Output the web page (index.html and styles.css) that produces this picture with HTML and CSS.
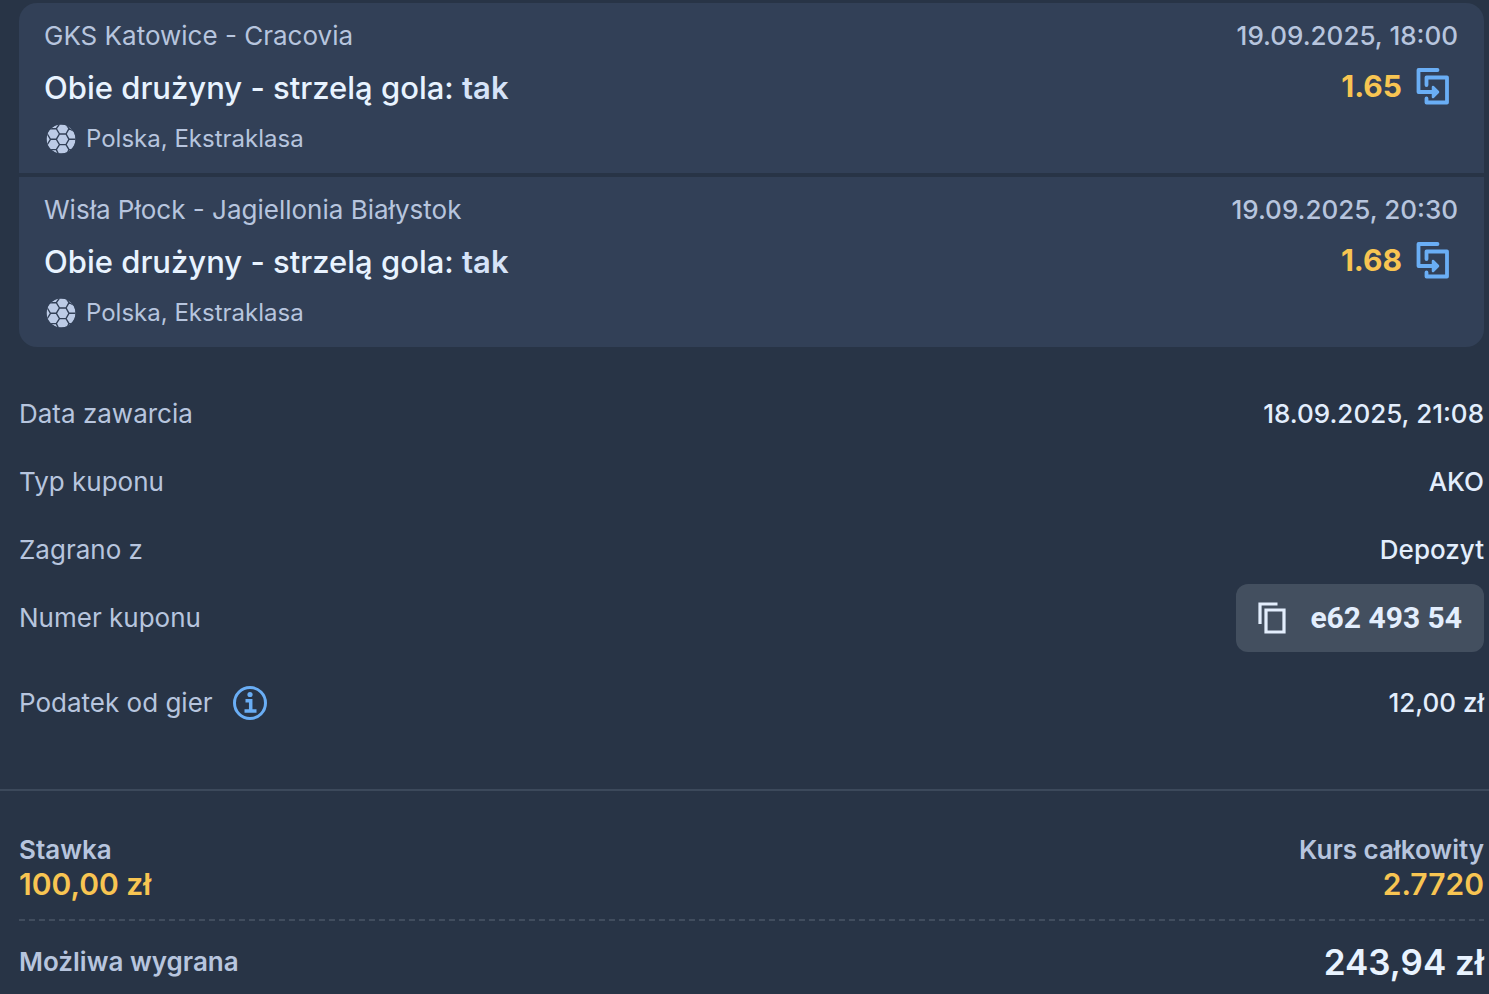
FILE: index.html
```
<!DOCTYPE html>
<html lang="pl">
<head>
    <meta charset="UTF-8">
    <meta name="viewport" content="width=device-width, initial-scale=1">
    <title>Kupon</title>
    <link rel="stylesheet" href="styles.css">
</head>
<body>
    <svg class="sprite" aria-hidden="true">
        <symbol id="icon-ball" viewBox="0 0 30 30">
            <clipPath id="ball-clip"><circle cx="15" cy="15" r="14.5"/></clipPath>
            <g clip-path="url(#ball-clip)">
                <circle cx="15" cy="15" r="14.5" fill="#bccbe6"/>
                <path d="M13.500 10h6.500l3 5.300-3 5.300h-6.500l-3.200-5.300zM10.300 15.300H4.500L1 9.500M4.500 15.300L1 21M13.500 10l-3.200-5.300H3M10.300 4.700L13.500 0M20 10l3-5.300L20 0M23 4.700l6 3M23 15.300h7M13.500 20.600l-3.200 5H3M10.300 25.600L12.500 30M20 20.600l3 5-2.500 5M23 25.600h6" fill="none" stroke="#324057" stroke-width="1.400"/>
            </g>
        </symbol>
        <symbol id="icon-share" viewBox="0 0 34 38">
            <g fill="none" stroke="#6aaef5" stroke-width="3.800" stroke-linecap="round" stroke-linejoin="round">
                <path d="M21.500 3H2.500v22h15" />
                <path d="M10.500 18V10.500h20.500V35.500H10.500v-4" />
            </g>
            <path d="M17 20l5 5-5 5z" fill="#6aaef5" stroke="#6aaef5" stroke-width="2.500" stroke-linejoin="round"/>
        </symbol>
    </svg>

    <main class="coupon">
        <ul class="bets">
            <li class="bet">
                <div class="bet-row bet-match">
                    <span>GKS Katowice - Cracovia</span>
                    <time datetime="2025-09-19T18:00">19.09.2025, 18:00</time>
                </div>
                <div class="bet-row bet-pick">
                    <span>Obie drużyny - strzelą gola: <b>tak</b></span>
                    <span class="bet-odds">1.65
                        <button type="button" class="icon-button" aria-label="Przenieś na kupon"><svg class="share"><use href="#icon-share"/></svg></button>
                    </span>
                </div>
                <div class="bet-league">
                    <svg class="ball" aria-hidden="true"><use href="#icon-ball"/></svg>
                    <span>Polska, Ekstraklasa</span>
                </div>
            </li>
            <li class="bet">
                <div class="bet-row bet-match">
                    <span>Wisła Płock - Jagiellonia Białystok</span>
                    <time datetime="2025-09-19T20:30">19.09.2025, 20:30</time>
                </div>
                <div class="bet-row bet-pick">
                    <span>Obie drużyny - strzelą gola: <b>tak</b></span>
                    <span class="bet-odds">1.68
                        <button type="button" class="icon-button" aria-label="Przenieś na kupon"><svg class="share"><use href="#icon-share"/></svg></button>
                    </span>
                </div>
                <div class="bet-league">
                    <svg class="ball" aria-hidden="true"><use href="#icon-ball"/></svg>
                    <span>Polska, Ekstraklasa</span>
                </div>
            </li>
        </ul>

        <dl class="details">
            <div class="detail"><dt>Data zawarcia</dt><dd>18.09.2025, 21:08</dd></div>
            <div class="detail"><dt>Typ kuponu</dt><dd>AKO</dd></div>
            <div class="detail"><dt>Zagrano z</dt><dd>Depozyt</dd></div>
            <div class="detail">
                <dt>Numer kuponu</dt>
                <dd>
                    <button type="button" class="copy-button">
                        <svg class="copy" viewBox="0 0 28 32" aria-hidden="true">
                            <path d="M19.500 2H2v20M8 8h18v22H8z" fill="none" stroke="#e3eefd" stroke-width="3.200"/>
                        </svg>
                        <span>e62 493 54</span>
                    </button>
                </dd>
            </div>
            <div class="detail detail-tax">
                <dt>
                    Podatek od gier
                    <button type="button" class="icon-button" aria-label="Informacja o podatku">
                        <svg class="info" viewBox="0 0 34 34" fill="none" stroke="#6aaef5">
                            <circle cx="17" cy="17" r="15.500" stroke-width="3"/>
                            <circle cx="17" cy="8.500" r="2.600" fill="#6aaef5" stroke="none"/>
                            <path d="M12.500 14.800h5.200v10M11.500 25h12" stroke-width="3.500"/>
                        </svg>
                    </button>
                </dt>
                <dd>12,00 zł</dd>
            </div>
        </dl>
    </main>

    <footer class="summary">
        <dl class="totals">
            <div><dt>Stawka</dt><dd>100,00 zł</dd></div>
            <div class="total-odds"><dt>Kurs całkowity</dt><dd>2.7720</dd></div>
        </dl>
        <svg class="dashes" aria-hidden="true"><line x1="0" y1="1" x2="100%" y2="1"/></svg>
        <dl class="win">
            <dt>Możliwa wygrana</dt>
            <dd>243,94 zł</dd>
        </dl>
    </footer>
</body>
</html>
```
FILE: styles.css
```
* {
    box-sizing: border-box;
}

body {
    margin: 0;
    background: #283446;
    color: #b7c5de;
    font-family: Inter, sans-serif;
    font-size: 26px;
    line-height: 34px;
}

ul, dl, dd {
    margin: 0;
    padding: 0;
}

button {
    border: none;
    font: inherit;
    color: inherit;
    cursor: pointer;
}

svg {
    display: block;
}

.sprite {
    position: absolute;
    width: 0;
    height: 0;
}

.coupon {
    padding: 3px 5px 0 19px;
}

.bets {
    display: flex;
    flex-direction: column;
    gap: 4px;
    border-radius: 18px;
    overflow: hidden;
    list-style: none;
}

.bet {
    padding: 16px 26px 17px 25px;
    background: #324057;
}

.bet-row {
    display: flex;
    align-items: center;
    justify-content: space-between;
}

.bet-match time {
    font-weight: 500;
}

.bet-pick {
    margin: 14px 0 13px;
    height: 42px;
    color: #e8f3ff;
    font-size: 31px;
    font-weight: 500;
}

.bet-pick b {
    color: #d6e3f8;
    font-weight: 600;
}

.bet-odds {
    display: flex;
    align-items: center;
    align-self: flex-start;
    gap: 14px;
    padding-right: 8px;
    color: #f8c552;
    font-size: 30px;
    font-weight: 700;
}

.icon-button {
    padding: 0;
    background: none;
}

.share {
    width: 34px;
    height: 38px;
}

.bet-league {
    display: flex;
    align-items: center;
    gap: 10px;
    padding-left: 2px;
    font-size: 24px;
}

.ball {
    width: 30px;
    height: 30px;
}

.details {
    padding: 33px 0 52px;
}

.detail {
    display: flex;
    align-items: center;
    justify-content: space-between;
    height: 68px;
}

.detail dd {
    color: #e3eefd;
    font-weight: 500;
}

.detail-tax {
    margin-top: 17px;
}

.detail-tax dt {
    display: flex;
    align-items: center;
    gap: 20px;
}

.info {
    width: 34px;
    height: 34px;
}

.copy-button {
    display: flex;
    align-items: center;
    gap: 24px;
    height: 68px;
    padding: 0 22px;
    border-radius: 12px;
    background: #434f5f;
    color: #e3eefd;
    font-family: Roboto, sans-serif;
    font-size: 30px;
    font-weight: 700;
}

.copy {
    width: 28px;
    height: 32px;
}

.summary {
    padding: 42px 5px 14px 19px;
    border-top: 2px solid #3c495b;
    font-weight: 600;
}

.totals {
    display: flex;
    justify-content: space-between;
    padding-bottom: 18px;
}

.totals dd {
    color: #f8c552;
    font-size: 30px;
}

.total-odds {
    text-align: right;
}

.dashes {
    width: 100%;
    height: 2px;
}

.dashes line {
    stroke: #414d5e;
    stroke-width: 2px;
    stroke-dasharray: 6 4;
}

.win {
    display: flex;
    align-items: center;
    justify-content: space-between;
    padding-top: 21px;
}

.win dd {
    color: #e8f3ff;
    font-size: 35px;
    line-height: 40px;
}
```
